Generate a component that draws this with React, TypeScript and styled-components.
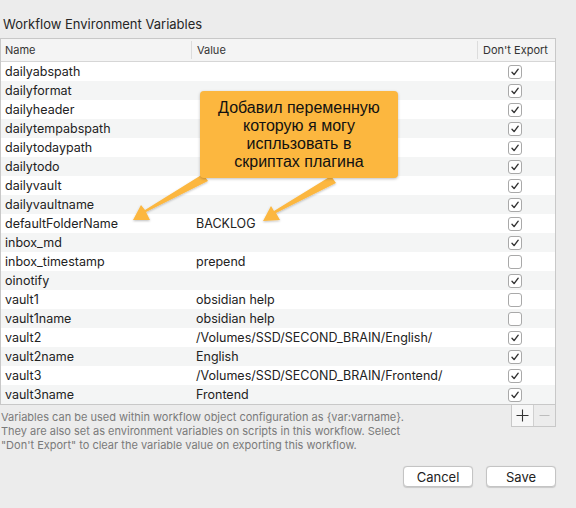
import React from "react";
import styled, { createGlobalStyle } from "styled-components";

const Global = createGlobalStyle`
  html, body { margin: 0; padding: 0; background: #ececec; }
  body { width: 576px; height: 508px; overflow: hidden; font-family: Inter, "Liberation Sans", sans-serif; }
`;

const Page = styled.div`
  position: relative;
  width: 576px;
  height: 508px;
  box-sizing: border-box;
  padding: 15px 20px 0 0;
  color: #222;
`;

const Title = styled.div`
  font-size: 13px;
  line-height: 18px;
  padding-left: 3px;
  color: #262626;
  margin-bottom: 5px;
`;

const Table = styled.div`
  width: 556px;
  box-sizing: border-box;
  border: 1px solid #c8c8c8;
  background: #fff;
`;

const cols = "190px 286px 1fr";

const HeaderRow = styled.div`
  display: grid;
  grid-template-columns: ${cols};
  height: 22px;
  background: #f4f4f4;
  border-bottom: 1px solid #d6d6d6;
  font-size: 11px;
  color: #333;
`;

const HeaderCell = styled.div<{ $sep?: boolean }>`
  display: flex;
  align-items: center;
  padding-left: ${(p) => (p.$sep ? "5px" : "4px")};
  border-left: ${(p) => (p.$sep ? "1px solid #dcdcdc" : "none")};
  margin: 2px 0;
`;

const Row = styled.div<{ $alt: boolean }>`
  display: grid;
  grid-template-columns: ${cols};
  height: 19px;
  background: ${(p) => (p.$alt ? "#f4f5f5" : "#ffffff")};
  font-size: 12.5px;
  color: #222;
`;

const Cell = styled.div<{ $pad: number }>`
  display: flex;
  align-items: center;
  padding-left: ${(p) => p.$pad}px;
  white-space: nowrap;
  overflow: hidden;
`;

const CheckCell = styled.div`
  display: flex;
  align-items: center;
  padding-left: 31px;
`;

const Box = styled.div`
  width: 12px;
  height: 12px;
  border: 1px solid #a9a9a9;
  border-radius: 3px;
  background: #fff;
  display: flex;
  align-items: center;
  justify-content: center;
  box-sizing: content-box;
`;

const BelowRow = styled.div`
  display: flex;
  justify-content: space-between;
  align-items: flex-start;
  width: 556px;
`;

const Note = styled.div`
  font-size: 11px;
  line-height: 14px;
  color: #7a7a7a;
  padding-top: 5px;
  padding-left: 1px;
`;

const PlusMinus = styled.div`
  display: flex;
  border: 1px solid #c8c8c8;
  border-top: none;
  height: 21px;
`;

const PMButton = styled.div<{ $disabled?: boolean }>`
  width: 21px;
  display: flex;
  align-items: center;
  justify-content: center;
  background: ${(p) => (p.$disabled ? "#ececec" : "#f7f7f7")};
  & + & { border-left: 1px solid #d0d0d0; }
`;

const Buttons = styled.div`
  display: flex;
  justify-content: flex-end;
  gap: 13px;
  width: 556px;
  margin-top: 14px;
`;

const Button = styled.div`
  width: 68px;
  height: 19px;
  background: #fff;
  border: 1px solid #c4c4c4;
  border-radius: 4px;
  box-shadow: 0 0.5px 1px rgba(0,0,0,0.15);
  display: flex;
  align-items: center;
  justify-content: center;
  font-size: 13px;
  color: #222;
`;

const Callout = styled.div`
  position: absolute;
  left: 200px;
  top: 91px;
  width: 198px;
  height: 87px;
  box-sizing: border-box;
  background: #fcb73f;
  border-radius: 4px;
  box-shadow: 0 1px 3px rgba(0,0,0,0.25);
  display: flex;
  align-items: center;
  justify-content: center;
  text-align: center;
  font-family: "Liberation Sans", Arial, sans-serif;
  font-size: 16px;
  line-height: 18px;
  color: #111;
  padding-top: 1px;
`;

const Arrows = styled.svg`
  position: absolute;
  left: 0;
  top: 0;
  pointer-events: none;
`;

type V = { name: string; value: string; checked: boolean };
const rows: V[] = [
  { name: "dailyabspath", value: "", checked: true },
  { name: "dailyformat", value: "", checked: true },
  { name: "dailyheader", value: "", checked: true },
  { name: "dailytempabspath", value: "", checked: true },
  { name: "dailytodaypath", value: "", checked: true },
  { name: "dailytodo", value: "", checked: true },
  { name: "dailyvault", value: "", checked: true },
  { name: "dailyvaultname", value: "", checked: true },
  { name: "defaultFolderName", value: "BACKLOG", checked: true },
  { name: "inbox_md", value: "", checked: true },
  { name: "inbox_timestamp", value: "prepend", checked: false },
  { name: "oinotify", value: "", checked: true },
  { name: "vault1", value: "obsidian help", checked: false },
  { name: "vault1name", value: "obsidian help", checked: false },
  { name: "vault2", value: "/Volumes/SSD/SECOND_BRAIN/English/", checked: true },
  { name: "vault2name", value: "English", checked: true },
  { name: "vault3", value: "/Volumes/SSD/SECOND_BRAIN/Frontend/", checked: true },
  { name: "vault3name", value: "Frontend", checked: true },
];

const Check = ({ on }: { on: boolean }) => (
  <Box>
    {on && (
      <svg width="10" height="10" viewBox="0 0 10 10">
        <path d="M2 5.3 L4.1 7.6 L8.2 2.2" fill="none" stroke="#333" strokeWidth="1.4" strokeLinecap="round" strokeLinejoin="round" />
      </svg>
    )}
  </Box>
);

export default function App() {
  return (
    <Page>
      <Global />
      <Title>Workflow Environment Variables</Title>
      <Table>
        <HeaderRow>
          <HeaderCell>Name</HeaderCell>
          <HeaderCell $sep>Value</HeaderCell>
          <HeaderCell $sep>Don't Export</HeaderCell>
        </HeaderRow>
        {rows.map((r, i) => (
          <Row key={r.name} $alt={i % 2 === 1}>
            <Cell $pad={4}>{r.name}</Cell>
            <Cell $pad={5}>{r.value}</Cell>
            <CheckCell>
              <Check on={r.checked} />
            </CheckCell>
          </Row>
        ))}
      </Table>
      <BelowRow>
        <Note>
          Variables can be used within workflow object configuration as {"{var:varname}"}.
          <br />
          They are also set as environment variables on scripts in this workflow. Select
          <br />
          "Don't Export" to clear the variable value on exporting this workflow.
        </Note>
        <PlusMinus>
          <PMButton>
            <svg width="13" height="13" viewBox="0 0 13 13">
              <path d="M6.5 0.5 V12.5 M0.5 6.5 H12.5" stroke="#333" strokeWidth="1.1" />
            </svg>
          </PMButton>
          <PMButton $disabled>
            <svg width="11" height="11" viewBox="0 0 11 11">
              <path d="M0.5 5.5 H10.5" stroke="#bdbdbd" strokeWidth="1" />
            </svg>
          </PMButton>
        </PlusMinus>
      </BelowRow>
      <Buttons>
        <Button>Cancel</Button>
        <Button>Save</Button>
      </Buttons>

      <Arrows width="576" height="508" viewBox="0 0 576 508">
        <defs>
          <filter id="sh" x="-20%" y="-20%" width="140%" height="140%">
            <feDropShadow dx="0" dy="1" stdDeviation="1" floodColor="#000" floodOpacity="0.25" />
          </filter>
        </defs>
        <g filter="url(#sh)" fill="#fcb73f">
          <path d="M203 174 L208 181 L146 212 L150 220 L133 220 L141 205 L145 210 Z" />
          <path d="M331 176 L336 183 L276 213 L280 220 L263 221 L271 206 L274 211 Z" />
        </g>
      </Arrows>
      <Callout>
        Добавил переменную
        <br />
        которую я могу
        <br />
        испльзовать в
        <br />
        скриптах плагина
      </Callout>
    </Page>
  );
}
